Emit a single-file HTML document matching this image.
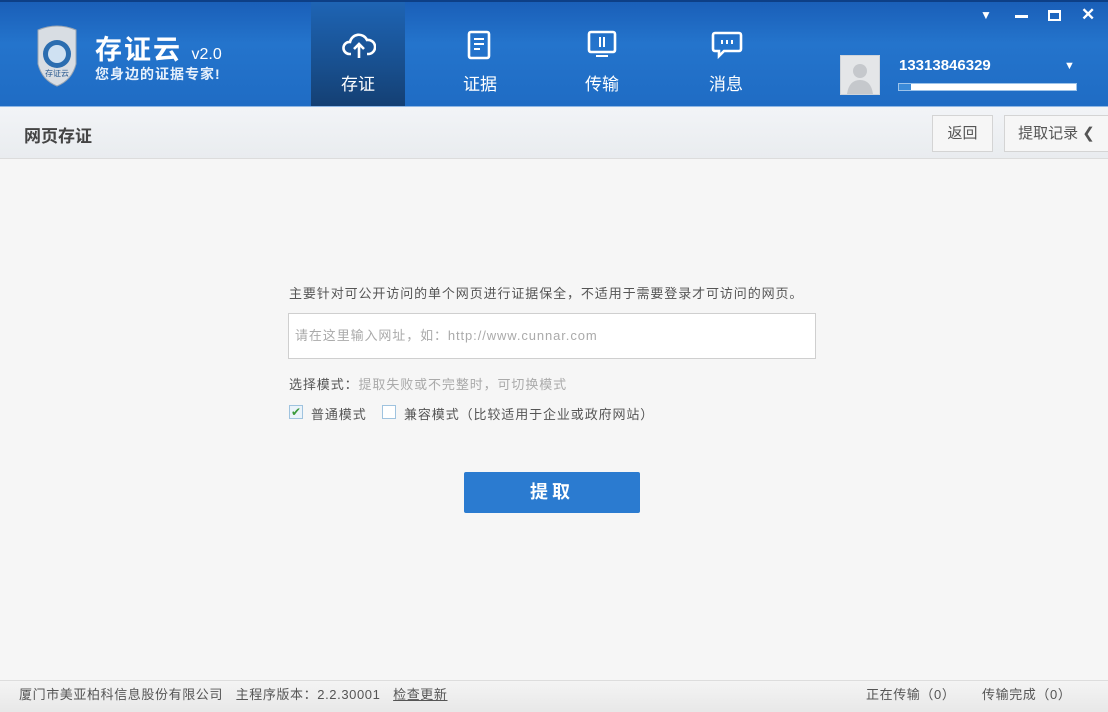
<!DOCTYPE html>
<html><head><meta charset="utf-8"><style>
*{margin:0;padding:0;box-sizing:border-box}
body{width:1108px;height:712px;overflow:hidden;background:#f6f6f6;font-family:"Liberation Sans","Noto Sans CJK SC",sans-serif;position:relative}
.hdr{position:absolute;left:0;top:0;width:1108px;height:106px;background:linear-gradient(180deg,#1a5fb8 0%,#2474cc 40%,#1f6cc4 100%);border-top:2px solid #0d3f86}
.abs{position:absolute}
.tab{position:absolute;top:0;width:94px;height:106px;color:#fff;text-align:center;font-size:17px}
.tab span{position:absolute;left:0;right:0;top:68px}
.tab svg{position:absolute;left:31px;top:28px}
.act{background:linear-gradient(180deg,#1e64b4 0%,#184f8e 60%,#143f72 100%)}
.sub{position:absolute;left:0;top:106px;width:1108px;height:53px;background:linear-gradient(#f2f4f7,#e9ecef);border-top:1px solid #8fb7e4;border-bottom:1px solid #dcdcdc}
.btn{position:absolute;top:115px;height:37px;background:#f6f6f6;border:1px solid #d4d4d4;font-size:15px;color:#555;line-height:35px;text-align:center}
.ft{position:absolute;left:0;top:680px;width:1108px;height:32px;background:linear-gradient(#f4f4f4,#e8e8e8);border-top:1px solid #ddd;font-size:13px;color:#555;line-height:28px;letter-spacing:0.6px}
.t13{font-size:13px;letter-spacing:0.9px}
</style></head><body>
<div class="hdr">
 <svg class="abs" style="left:32px;top:22px" width="50" height="64" viewBox="0 0 50 64"><path d="M6 6 Q25 -2 44 6 L44 40 Q40 56 25 62 Q10 56 6 40Z" fill="#d8dde3" stroke="#9aa6b4"/><circle cx="25" cy="30" r="14" fill="#2b6db0"/><circle cx="25" cy="30" r="9" fill="#cfe1f2"/><text x="25" y="52" font-size="8" text-anchor="middle" fill="#2b5a90">存证云</text></svg>
 <div class="abs" style="left:95px;top:26px;color:#fff;font-size:27px;font-weight:bold;letter-spacing:2px">存证云 <span style="font-size:16px;font-weight:normal;letter-spacing:0">v2.0</span></div>
 <div class="abs" style="left:95px;top:62px;color:#e6f0fb;font-size:14px;font-weight:bold;letter-spacing:1px">您身边的证据专家!</div>
 <div class="tab act" style="left:311px"><svg width="34" height="30" viewBox="0 0 34 30"><path d="M9 24 H7 A6 6 0 0 1 8 12 A9 9 0 0 1 25 10 A7 7 0 0 1 27 24 H25" fill="none" stroke="#fff" stroke-width="2.6"/><path d="M17 28 V15 M12 19 L17 14 L22 19" fill="none" stroke="#fff" stroke-width="2.6"/></svg><span>存证</span></div>
 <div class="tab" style="left:433px"><svg width="34" height="32" viewBox="0 0 34 32"><rect x="5" y="2" width="20" height="26" rx="2" fill="none" stroke="#fff" stroke-width="2.6"/><path d="M10 9h10M10 14h10M10 19h6" stroke="#fff" stroke-width="2"/></svg><span>证据</span></div>
 <div class="tab" style="left:555px"><svg width="34" height="32" viewBox="0 0 34 32"><rect x="3" y="2" width="26" height="20" rx="2" fill="none" stroke="#fff" stroke-width="2.6"/><path d="M10 26h12M14 7v10M18 7v10" stroke="#fff" stroke-width="2"/></svg><span>传输</span></div>
 <div class="tab" style="left:679px"><svg width="34" height="32" viewBox="0 0 34 32"><path d="M5 3h24a2 2 0 0 1 2 2v14a2 2 0 0 1-2 2H14l-5 5v-5H5a2 2 0 0 1-2-2V5a2 2 0 0 1 2-2z" fill="none" stroke="#fff" stroke-width="2.6"/><path d="M12 10v4M17 10v4M22 10v4" stroke="#fff" stroke-width="2"/></svg><span>消息</span></div>
 <div class="abs" style="left:840px;top:53px;width:40px;height:40px;background:#e4e6e8;border:1px solid #cfd4da"><svg width="38" height="38" viewBox="0 0 38 38"><circle cx="19" cy="15" r="7" fill="#c5c8cc"/><path d="M6 38 Q8 24 19 24 Q30 24 32 38Z" fill="#c5c8cc"/></svg></div>
 <div class="abs" style="left:899px;top:55px;color:#fff;font-size:15px;font-weight:bold">13313846329</div>
 <div class="abs" style="left:1064px;top:58px;color:#fff;font-size:11px">▼</div>
 <div class="abs" style="left:898px;top:81px;width:179px;height:8px;background:#fff;border:1px solid #9cc3ea"><div style="width:12px;height:6px;background:#3a8ad8"></div></div>
 <div class="abs" style="left:980px;top:6px;color:#fff;font-size:12px">▼</div>
 <div class="abs" style="left:1015px;top:13px;width:13px;height:3px;background:#fff"></div>
 <div class="abs" style="left:1048px;top:8px;width:13px;height:11px;border:2px solid #fff;border-top-width:3px"></div>
 <div class="abs" style="left:1081px;top:3px;color:#fff;font-size:17px;font-weight:bold">✕</div>
</div>
<div class="sub"><div class="abs" style="left:24px;top:15px;font-size:17px;font-weight:bold;color:#444">网页存证</div></div>
<div class="btn" style="left:932px;width:61px">返回</div>
<div class="btn" style="left:1004px;width:104px;border-right:none">提取记录 ❮</div>
<div class="abs t13" style="left:289px;top:283px;color:#555">主要针对可公开访问的单个网页进行证据保全，不适用于需要登录才可访问的网页。</div>
<div class="abs t13" style="left:288px;top:313px;width:528px;height:46px;background:#fff;border:1px solid #cfcfcf;color:#aaa;line-height:44px;padding-left:6px">请在这里输入网址，如：http://www.cunnar.com</div>
<div class="abs t13" style="left:289px;top:374px;color:#555">选择模式：<span style="color:#aaa">提取失败或不完整时，可切换模式</span></div>
<div class="abs" style="left:289px;top:405px;width:14px;height:14px;border:1px solid #9fc3df;background:#eaf3fa;color:#3a9a3a;font-size:12px;line-height:12px;text-align:center">✔</div>
<div class="abs t13" style="left:311px;top:404px;color:#555">普通模式</div>
<div class="abs" style="left:382px;top:405px;width:14px;height:14px;border:1px solid #9fc3df;background:#fff"></div>
<div class="abs t13" style="left:404px;top:404px;color:#555">兼容模式（比较适用于企业或政府网站）</div>
<div class="abs" style="left:464px;top:472px;width:176px;height:41px;background:#2b7bd0;border-radius:2px;color:#fff;font-size:18px;font-weight:bold;text-align:center;line-height:41px;letter-spacing:4px">提取</div>
<div class="ft"><span class="abs" style="left:19px">厦门市美亚柏科信息股份有限公司&nbsp;&nbsp;&nbsp;主程序版本：2.2.30001&nbsp;&nbsp;&nbsp;<u>检查更新</u></span><span class="abs" style="left:866px">正在传输（0）</span><span class="abs" style="left:982px">传输完成（0）</span></div>
</body></html>
